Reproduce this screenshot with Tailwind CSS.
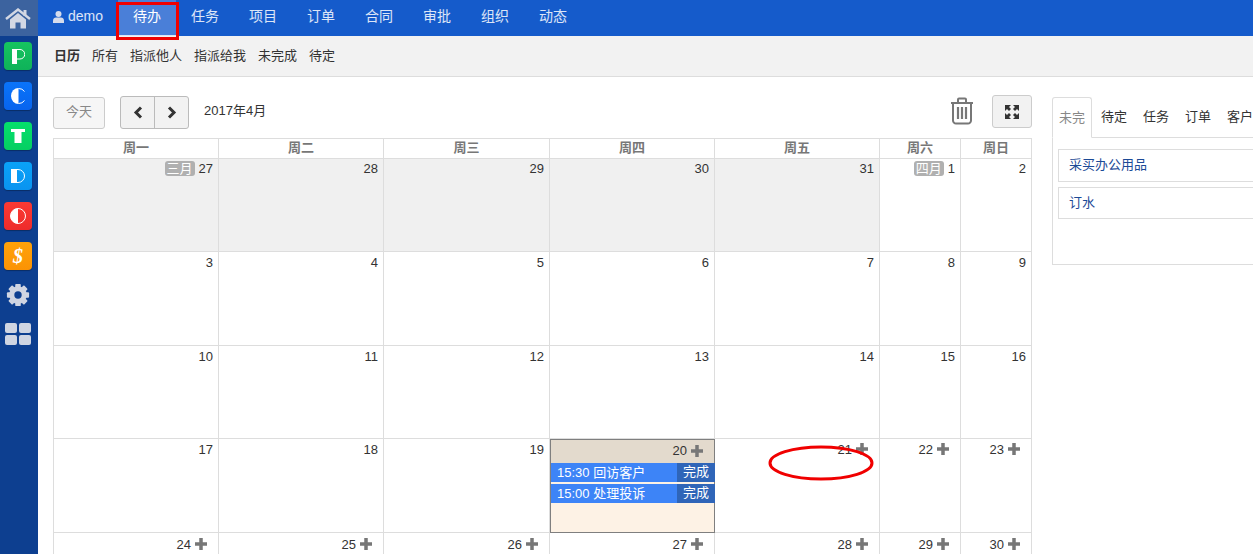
<!DOCTYPE html>
<html lang="zh">
<head>
  <meta charset="UTF-8">
  <title>待办</title>
  <script src="https://cdn.jsdelivr.net/npm/@tailwindcss/browser@4"></script>
</head>
<body class="bg-white text-[#333] text-[14px] font-['Liberation_Sans','Noto_Sans_CJK_SC',sans-serif]">
<div class="relative flex w-[1253px] h-[554px] overflow-hidden">

  <!-- sidebar -->
  <aside class="w-[38px] shrink-0 bg-[#0d3f90]">
    <div class="w-full h-[36px] bg-[#3c639f] pr-[2px] flex items-center justify-center">
      <svg width="26" height="21" viewBox="0 0 26 21"><path d="M1 11 13 1.500 25 11" fill="none" stroke="#d3d8e4" stroke-width="2.400"/><path d="M5 11.500 13 5l8 6.500V20.500h-5.500v-6h-5v6H5z" fill="#d3d8e4"/><rect x="18.500" y="2" width="3" height="6" fill="#d3d8e4"/></svg>
    </div>
    <div class="w-[36px] flex flex-col items-center">
      <div class="mt-[6px] w-[28px] h-[28px] rounded-[4px] bg-gradient-to-b from-[#16c460] to-[#0fb259] shadow-[0_1px_1px_rgba(0,0,0,0.3)] flex items-center justify-center">
        <svg width="13" height="15" viewBox="0 0 13 15"><rect x="0" y="0" width="5" height="15" fill="#fff"/><path d="M5 .5h3a4.500 4.500 0 0 1 0 9.500H5" fill="none" stroke="#fff"/></svg>
      </div>
      <div class="mt-[12px] w-[28px] h-[28px] rounded-[4px] bg-gradient-to-b from-[#0a74fa] to-[#0864ee] shadow-[0_1px_1px_rgba(0,0,0,0.3)] flex items-center justify-center">
        <svg width="15" height="16" viewBox="0 0 15 16"><path d="M7.500 0a7.500 8 0 0 0 0 16z" fill="#fff"/><path d="M7.500 .5a7 7 0 0 1 6 3M7.500 15.500a7 7 0 0 0 6-3" fill="none" stroke="#fff"/></svg>
      </div>
      <div class="mt-[12px] w-[28px] h-[28px] rounded-[4px] bg-gradient-to-b from-[#05e06c] to-[#05cf62] shadow-[0_1px_1px_rgba(0,0,0,0.3)] flex items-center justify-center">
        <svg width="14" height="14" viewBox="0 0 14 14"><rect x="0" y="0" width="14" height="3" fill="#fff"/><rect x="3.500" y="0" width="7" height="14" fill="#fff"/></svg>
      </div>
      <div class="mt-[12px] w-[28px] h-[28px] rounded-[4px] bg-gradient-to-b from-[#0aa2f8] to-[#0a94f0] shadow-[0_1px_1px_rgba(0,0,0,0.3)] flex items-center justify-center">
        <svg width="14" height="14" viewBox="0 0 14 14"><rect x="0" y="0" width="6" height="14" fill="#fff"/><path d="M6 .5h1a6.500 6.500 0 0 1 0 13H6" fill="none" stroke="#fff"/></svg>
      </div>
      <div class="mt-[12px] w-[28px] h-[28px] rounded-[4px] bg-gradient-to-b from-[#fb3a33] to-[#ee2b2b] shadow-[0_1px_1px_rgba(0,0,0,0.3)] flex items-center justify-center">
        <svg width="16" height="16" viewBox="0 0 16 16"><path d="M8 .5a7.500 7.500 0 0 0 0 15z" fill="#fff"/><circle cx="8" cy="8" r="7.500" fill="none" stroke="#fff"/></svg>
      </div>
      <div class="mt-[12px] w-[28px] h-[28px] rounded-[4px] bg-gradient-to-b from-[#ffa209] to-[#fb9304] shadow-[0_1px_1px_rgba(0,0,0,0.3)] flex items-center justify-center text-white text-[20px] leading-none font-bold italic font-['Liberation_Serif',serif]">$</div>
      <div class="mt-[13px] h-[24px] flex items-center">
        <svg width="24" height="24" viewBox="0 0 26 26" fill="#cfd5e2">
          <circle cx="13" cy="13" r="9.500"/>
          <rect x="10" y="1" width="6" height="24" rx="1"/>
          <rect x="10" y="1" width="6" height="24" rx="1" transform="rotate(45 13 13)"/>
          <rect x="10" y="1" width="6" height="24" rx="1" transform="rotate(90 13 13)"/>
          <rect x="10" y="1" width="6" height="24" rx="1" transform="rotate(135 13 13)"/>
          <circle cx="13" cy="13" r="4" fill="#0d3f90"/>
        </svg>
      </div>
      <div class="mt-[16px] grid grid-cols-2 gap-[2px]">
        <div class="w-[12px] h-[10px] rounded-[2px] bg-[#cfd5e2]"></div>
        <div class="w-[12px] h-[10px] rounded-[2px] bg-[#cfd5e2]"></div>
        <div class="w-[12px] h-[10px] rounded-[2px] bg-[#cfd5e2]"></div>
        <div class="w-[12px] h-[10px] rounded-[2px] bg-[#cfd5e2]"></div>
      </div>
    </div>
  </aside>

  <main class="flex-1 min-w-0">
    <!-- top nav -->
    <nav class="h-[36px] bg-[#155bcb] flex text-white/85 leading-[33px]">
      <a class="px-[15px] pb-[3px] flex items-center gap-[4px]">
        <svg width="11" height="12" viewBox="0 0 11 12" fill="#d5dcec"><circle cx="5.500" cy="3" r="3"/><path d="M0 12V9.500C0 7.500 1.500 6.500 3 6.500h5c1.500 0 3 1 3 3V12z"/></svg>
        demo
      </a>
      <a class="px-[15px] bg-[#4a7fd8] text-white border-b border-white/80">待办</a>
      <a class="px-[15px]">任务</a>
      <a class="px-[15px]">项目</a>
      <a class="px-[15px]">订单</a>
      <a class="px-[15px]">合同</a>
      <a class="px-[15px]">审批</a>
      <a class="px-[15px]">组织</a>
      <a class="px-[15px]">动态</a>
    </nav>

    <!-- sub nav -->
    <div class="h-[41px] bg-[#f2f2f2] border-b border-[#ddd] pl-[16px] flex items-center gap-[12px] text-[13px] pb-[1px]">
      <a class="font-bold">日历</a>
      <a>所有</a>
      <a>指派他人</a>
      <a>指派给我</a>
      <a>未完成</a>
      <a>待定</a>
    </div>

    <div class="flex pl-[15px]">
      <!-- calendar column -->
      <div class="w-[979px] shrink-0">
        <div class="h-[61px] flex items-start relative">
          <button class="mt-[20px] w-[52px] h-[32px] pb-[2px] border border-[#ccc] rounded-[3px] bg-[#f6f6f6] text-[#888] text-[13px]">今天</button>
          <div class="mt-[19px] ml-[15px] flex h-[33px] w-[69px] border border-[#bbb] rounded-[3px] bg-[#f2f2f2]">
            <button class="w-[34px] border-r border-[#bbb] flex items-center justify-center">
              <svg width="10" height="13" viewBox="0 0 10 13"><path d="M8 1.500 3 6.500l5 5" fill="none" stroke="#333" stroke-width="3"/></svg>
            </button>
            <button class="flex-1 flex items-center justify-center">
              <svg width="10" height="13" viewBox="0 0 10 13"><path d="M2 1.500l5 5-5 5" fill="none" stroke="#333" stroke-width="3"/></svg>
            </button>
          </div>
          <div class="mt-[24px] ml-[15px] text-[13px] leading-[20px]">2017年4月</div>
          <svg class="ml-auto mt-[20px]" width="24" height="28" viewBox="0 0 24 28" fill="none" stroke="#777">
            <path stroke-width="2" d="M1 6h22M8 6V2.500a1 1 0 0 1 1-1h6a1 1 0 0 1 1 1V6M3 6v17.500a3 3 0 0 0 3 3h12a3 3 0 0 0 3-3V6"/>
            <path stroke-width="2.200" d="M8 10v12M12 10v12M16 10v12"/>
          </svg>
          <button class="ml-[18px] mt-[18px] w-[40px] h-[33px] border border-[#ccc] rounded-[3px] bg-[#f2f2f2] flex items-center justify-center">
            <svg width="14" height="14" viewBox="0 0 14 14" fill="#333"><path d="M0 0h6L4 2l2 2-2 2-2-2-2 2zM14 0v6l-2-2-2 2-2-2 2-2-2-2zM0 14V8l2 2 2-2 2 2-2 2 2 2zM14 14H8l2-2-2-2 2-2 2 2 2-2z"/></svg>
          </button>
        </div>

        <div class="border-l border-t border-[#ddd] grid grid-cols-[165px_165px_166px_165px_165px_81px_71px] grid-rows-[20px_93px_94px_93px_94px_94px] text-right text-[13px]">
          <!-- header -->
          <div class="border-r border-b border-[#ddd] text-center font-bold leading-[18px] text-[#777]">周一</div>
          <div class="border-r border-b border-[#ddd] text-center font-bold leading-[18px] text-[#777]">周二</div>
          <div class="border-r border-b border-[#ddd] text-center font-bold leading-[18px] text-[#777]">周三</div>
          <div class="border-r border-b border-[#ddd] text-center font-bold leading-[18px] text-[#777]">周四</div>
          <div class="border-r border-b border-[#ddd] text-center font-bold leading-[18px] text-[#777]">周五</div>
          <div class="border-r border-b border-[#ddd] text-center font-bold leading-[18px] text-[#777]">周六</div>
          <div class="border-r border-b border-[#ddd] text-center font-bold leading-[18px] text-[#777]">周日</div>

          <!-- week 1 -->
          <div class="border-r border-b border-[#ddd] bg-[#f0f0f0] px-[5px] leading-[20px]"><span class="inline-block mr-[4px] h-[15px] leading-[15px] rounded-[3px] bg-[#b0b0b0] text-white w-[30px] text-center align-[0px]">三月</span>27</div>
          <div class="border-r border-b border-[#ddd] bg-[#f0f0f0] px-[5px] leading-[20px]">28</div>
          <div class="border-r border-b border-[#ddd] bg-[#f0f0f0] px-[5px] leading-[20px]">29</div>
          <div class="border-r border-b border-[#ddd] bg-[#f0f0f0] px-[5px] leading-[20px]">30</div>
          <div class="border-r border-b border-[#ddd] bg-[#f0f0f0] px-[5px] leading-[20px]">31</div>
          <div class="border-r border-b border-[#ddd] px-[5px] leading-[20px]"><span class="inline-block mr-[4px] h-[15px] leading-[15px] rounded-[3px] bg-[#b0b0b0] text-white w-[30px] text-center align-[0px]">四月</span>1</div>
          <div class="border-r border-b border-[#ddd] px-[5px] leading-[20px]">2</div>

          <!-- week 2 -->
          <div class="border-r border-b border-[#ddd] px-[5px] pt-[1px] leading-[20px]">3</div>
          <div class="border-r border-b border-[#ddd] px-[5px] pt-[1px] leading-[20px]">4</div>
          <div class="border-r border-b border-[#ddd] px-[5px] pt-[1px] leading-[20px]">5</div>
          <div class="border-r border-b border-[#ddd] px-[5px] pt-[1px] leading-[20px]">6</div>
          <div class="border-r border-b border-[#ddd] px-[5px] pt-[1px] leading-[20px]">7</div>
          <div class="border-r border-b border-[#ddd] px-[5px] pt-[1px] leading-[20px]">8</div>
          <div class="border-r border-b border-[#ddd] px-[5px] pt-[1px] leading-[20px]">9</div>

          <!-- week 3 -->
          <div class="border-r border-b border-[#ddd] px-[5px] pt-[1px] leading-[20px]">10</div>
          <div class="border-r border-b border-[#ddd] px-[5px] pt-[1px] leading-[20px]">11</div>
          <div class="border-r border-b border-[#ddd] px-[5px] pt-[1px] leading-[20px]">12</div>
          <div class="border-r border-b border-[#ddd] px-[5px] pt-[1px] leading-[20px]">13</div>
          <div class="border-r border-b border-[#ddd] px-[5px] pt-[1px] leading-[20px]">14</div>
          <div class="border-r border-b border-[#ddd] px-[5px] pt-[1px] leading-[20px]">15</div>
          <div class="border-r border-b border-[#ddd] px-[5px] pt-[1px] leading-[20px]">16</div>

          <!-- week 4 -->
          <div class="border-r border-b border-[#ddd] px-[5px] pt-[1px] leading-[20px]">17</div>
          <div class="border-r border-b border-[#ddd] px-[5px] pt-[1px] leading-[20px]">18</div>
          <div class="border-r border-b border-[#ddd] px-[5px] pt-[1px] leading-[20px]">19</div>
          <div class="border border-[#7f7f7f] bg-[#fdf2e5] flex flex-col">
            <div class="h-[23px] bg-[#e3dacd] pr-[11px] pb-[2px] flex items-center justify-end gap-[4px]">20 <svg width="12" height="12" viewBox="0 0 12 12" fill="#777"><path d="M4.250 0h3.500v4.250H12v3.500H7.750V12h-3.500V7.750H0v-3.500h4.250z"/></svg></div>
            <div class="h-[19px] mr-[-1px] bg-[#3d84f7] text-white flex items-center justify-between pl-[6px] leading-[17px]"><span>15:30 回访客户</span><span class="w-[38px] h-full bg-[#2f65b8] text-center">完成</span></div>
            <div class="h-[19px] mt-[2px] mr-[-1px] bg-[#3d84f7] text-white flex items-center justify-between pl-[6px] leading-[17px]"><span>15:00 处理投诉</span><span class="w-[38px] h-full bg-[#2f65b8] text-center">完成</span></div>
          </div>
          <div class="border-r border-b border-[#ddd] pr-[11px] pt-[1px] flex items-start justify-end gap-[4px] leading-[20px]">21 <svg class="mt-[3px]" width="12" height="12" viewBox="0 0 12 12" fill="#777"><path d="M4.250 0h3.500v4.250H12v3.500H7.750V12h-3.500V7.750H0v-3.500h4.250z"/></svg></div>
          <div class="border-r border-b border-[#ddd] pr-[11px] pt-[1px] flex items-start justify-end gap-[4px] leading-[20px]">22 <svg class="mt-[3px]" width="12" height="12" viewBox="0 0 12 12" fill="#777"><path d="M4.250 0h3.500v4.250H12v3.500H7.750V12h-3.500V7.750H0v-3.500h4.250z"/></svg></div>
          <div class="border-r border-b border-[#ddd] pr-[11px] pt-[1px] flex items-start justify-end gap-[4px] leading-[20px]">23 <svg class="mt-[3px]" width="12" height="12" viewBox="0 0 12 12" fill="#777"><path d="M4.250 0h3.500v4.250H12v3.500H7.750V12h-3.500V7.750H0v-3.500h4.250z"/></svg></div>

          <!-- week 5 -->
          <div class="border-r border-b border-[#ddd] pr-[11px] pt-[2px] flex items-start justify-end gap-[4px] leading-[20px]">24 <svg class="mt-[3px]" width="12" height="12" viewBox="0 0 12 12" fill="#777"><path d="M4.250 0h3.500v4.250H12v3.500H7.750V12h-3.500V7.750H0v-3.500h4.250z"/></svg></div>
          <div class="border-r border-b border-[#ddd] pr-[11px] pt-[2px] flex items-start justify-end gap-[4px] leading-[20px]">25 <svg class="mt-[3px]" width="12" height="12" viewBox="0 0 12 12" fill="#777"><path d="M4.250 0h3.500v4.250H12v3.500H7.750V12h-3.500V7.750H0v-3.500h4.250z"/></svg></div>
          <div class="border-r border-b border-[#ddd] pr-[11px] pt-[2px] flex items-start justify-end gap-[4px] leading-[20px]">26 <svg class="mt-[3px]" width="12" height="12" viewBox="0 0 12 12" fill="#777"><path d="M4.250 0h3.500v4.250H12v3.500H7.750V12h-3.500V7.750H0v-3.500h4.250z"/></svg></div>
          <div class="border-r border-b border-[#ddd] pr-[11px] pt-[2px] flex items-start justify-end gap-[4px] leading-[20px]">27 <svg class="mt-[3px]" width="12" height="12" viewBox="0 0 12 12" fill="#777"><path d="M4.250 0h3.500v4.250H12v3.500H7.750V12h-3.500V7.750H0v-3.500h4.250z"/></svg></div>
          <div class="border-r border-b border-[#ddd] pr-[11px] pt-[2px] flex items-start justify-end gap-[4px] leading-[20px]">28 <svg class="mt-[3px]" width="12" height="12" viewBox="0 0 12 12" fill="#777"><path d="M4.250 0h3.500v4.250H12v3.500H7.750V12h-3.500V7.750H0v-3.500h4.250z"/></svg></div>
          <div class="border-r border-b border-[#ddd] pr-[11px] pt-[2px] flex items-start justify-end gap-[4px] leading-[20px]">29 <svg class="mt-[3px]" width="12" height="12" viewBox="0 0 12 12" fill="#777"><path d="M4.250 0h3.500v4.250H12v3.500H7.750V12h-3.500V7.750H0v-3.500h4.250z"/></svg></div>
          <div class="border-r border-b border-[#ddd] pr-[11px] pt-[2px] flex items-start justify-end gap-[4px] leading-[20px]">30 <svg class="mt-[3px]" width="12" height="12" viewBox="0 0 12 12" fill="#777"><path d="M4.250 0h3.500v4.250H12v3.500H7.750V12h-3.500V7.750H0v-3.500h4.250z"/></svg></div>
        </div>
      </div>

      <!-- right panel -->
      <div class="ml-[20px] mt-[20px] w-[260px] shrink-0">
        <div class="flex h-[41px] border-b border-[#ddd] text-[13px]">
          <a class="w-[40px] h-[41px] border border-[#ddd] border-b-white rounded-t-[3px] bg-white text-[#888] text-center leading-[40px]">未完</a>
          <a class="w-[42px] pl-[9px] leading-[40px]">待定</a>
          <a class="w-[42px] pl-[9px] leading-[40px]">任务</a>
          <a class="w-[42px] pl-[9px] leading-[40px]">订单</a>
          <a class="w-[42px] pl-[9px] leading-[40px]">客户</a>
        </div>
        <div class="h-[127px] border-l border-b border-[#ddd] pl-[5px] pt-[11px] text-[13px] text-[#1c4a96]">
          <div class="h-[33px] border border-[#ddd] pl-[10px] leading-[29px]">采买办公用品</div>
          <div class="h-[32px] mt-[5px] border border-[#ddd] pl-[10px] leading-[29px]">订水</div>
        </div>
      </div>
    </div>
  </main>

  <!-- red annotations -->
  <div class="absolute left-[116px] top-[2px] w-[63px] h-[38px] border-[3px] border-[#f00000]"></div>
  <svg class="absolute left-[768px] top-[445px]" width="106" height="36" viewBox="0 0 106 36"><ellipse cx="53" cy="18" rx="51" ry="16" fill="none" stroke="#f00000" stroke-width="3"/></svg>
</div>
</body>
</html>
